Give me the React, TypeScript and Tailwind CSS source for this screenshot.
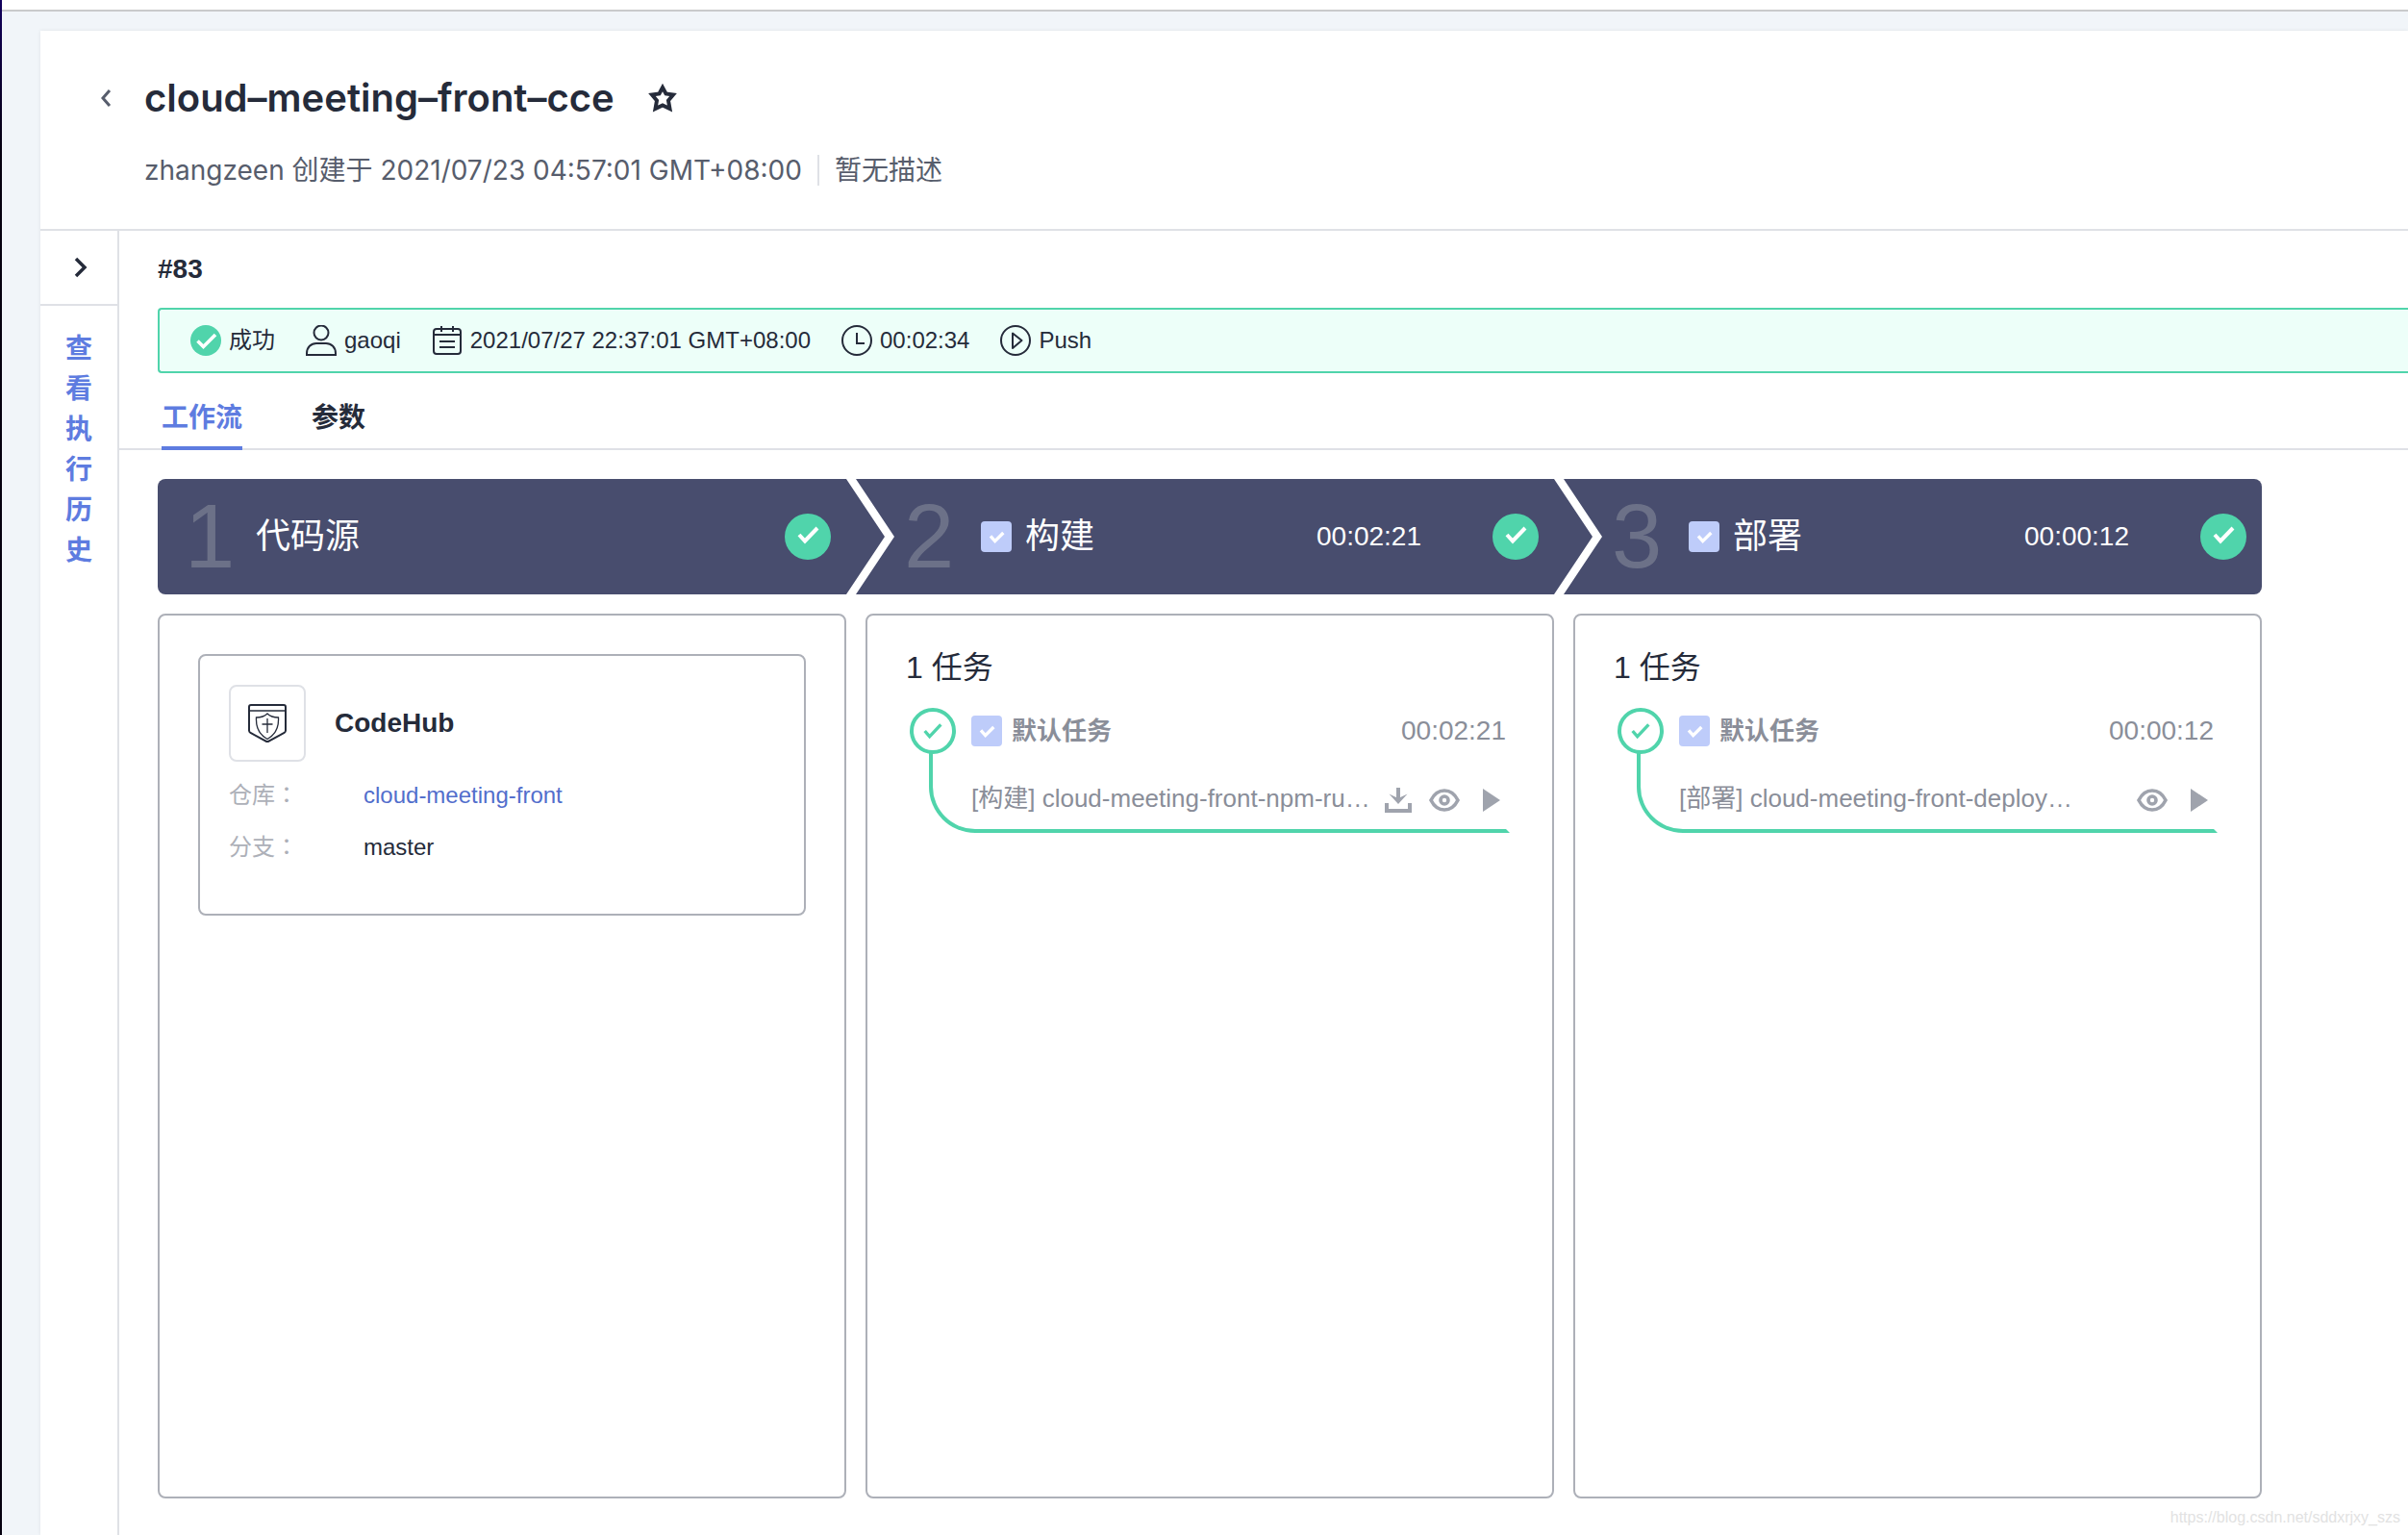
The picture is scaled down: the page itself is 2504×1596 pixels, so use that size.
import React from "react";

const HEAD_FONT = "font-[Inter,'Noto_Sans_CJK_SC',sans-serif]";

function Check({ className, points, width }: { className: string; points: string; width: number }) {
  return (
    <svg className={className} viewBox="0 0 48 48" fill="none" stroke="currentColor" strokeWidth={width} aria-hidden="true">
      <polyline points={points} />
    </svg>
  );
}

function CheckBox({ label }: { label: string }) {
  return (
    <span className="relative size-8 shrink-0">
      <input
        type="checkbox"
        aria-label={label}
        defaultChecked
        disabled
        className="block size-8 appearance-none rounded-sm bg-[#beccfa]"
      />
      <Check className="pointer-events-none absolute inset-0 size-8 text-white" points="15,23 22,31 35,18" width={5} />
    </span>
  );
}

function SuccessIcon() {
  return (
    <svg className="size-8" viewBox="0 0 32 32" fill="none" aria-hidden="true">
      <circle cx="16" cy="16" r="16" fill="#50d4ab" />
      <polyline points="7.5,16.5 13.5,22.5 26,10" stroke="#fff" strokeWidth="3.6" />
    </svg>
  );
}

function UserIcon() {
  return (
    <svg className="size-8" viewBox="0 0 32 32" fill="none" stroke="#252b3a" strokeWidth="2" aria-hidden="true">
      <circle cx="16" cy="8" r="7.5" />
      <path d="M1 31v-1.500c0-6.500 4.500-10.500 10-10.500h10c5.500 0 10 4 10 10.500v1.500z" />
    </svg>
  );
}

function CalendarIcon() {
  return (
    <svg className="size-8" viewBox="0 0 32 32" fill="none" stroke="#252b3a" strokeWidth="2" aria-hidden="true">
      <rect x="2" y="4" width="28" height="26" rx="3" />
      <path d="M2 10h28M10 1v6M22 1v6M8 17h16M8 23h16" />
    </svg>
  );
}

function ClockIcon() {
  return (
    <svg className="size-8" viewBox="0 0 32 32" fill="none" stroke="#252b3a" strokeWidth="2" aria-hidden="true">
      <circle cx="16" cy="16" r="15" />
      <path d="M16 8v11h8" />
    </svg>
  );
}

function TriggerIcon() {
  return (
    <svg className="size-8" viewBox="0 0 32 32" fill="none" stroke="#252b3a" strokeWidth="2" strokeLinejoin="round" aria-hidden="true">
      <circle cx="16" cy="16" r="15" />
      <path d="M13 8.500v15.500l9.500-8z" />
    </svg>
  );
}

function CodeHubIcon() {
  return (
    <svg className="size-10" viewBox="0 0 40 40" fill="none" stroke="#252b3a" aria-hidden="true">
      <path d="M1 3q0-2 2-2h34q2 0 2 2v24.500q0 1.500-1.500 2.500l-17.500 9.500l-17.500-9.500q-1.500-1-1.500-2.500z" strokeWidth="2" />
      <path d="M1 7h38" strokeWidth="1.500" />
      <path d="M20 10c3 3 7 4 11.500 4c.5 9-2.500 17.500-11.500 22.500c-9-5-12-13.500-11.500-22.500c4.500 0 8.500-1 11.500-4z" strokeWidth="1.300" />
      <path d="M20 15v15M14.500 21h11" strokeWidth="1.300" />
    </svg>
  );
}

function DownloadIcon() {
  return (
    <svg className="size-7" viewBox="0 0 28 28" fill="none" stroke="currentColor" strokeWidth="4" aria-hidden="true">
      <path d="M2 17v8h24v-8" />
      <path d="M14 1v13" />
      <path d="M4.500 7.500L14 18l9.500-10.500l-9.500 4.500z" fill="currentColor" stroke="none" />
    </svg>
  );
}

function EyeIcon() {
  return (
    <svg className="size-8" viewBox="0 0 32 32" fill="none" stroke="currentColor" aria-hidden="true">
      <path d="M2 16c3.500-7 8.500-10 14-10s10.500 3 14 10c-3.500 7-8.500 10-14 10s-10.500-3-14-10z" strokeWidth="3.600" />
      <circle cx="16" cy="16" r="4" strokeWidth="3.600" />
    </svg>
  );
}

function PlayIcon() {
  return (
    <svg className="h-6 w-[18px]" viewBox="0 0 18 24" fill="currentColor" aria-hidden="true">
      <path d="M0 0L18 12L0 24z" />
    </svg>
  );
}

type StageInfo = { no: number; name: string; time?: string };
const stages: StageInfo[] = [
  { no: 1, name: "代码源" },
  { no: 2, name: "构建", time: "00:02:21" },
  { no: 3, name: "部署", time: "00:00:12" },
];

function StageHeader({ stage, last }: { stage: StageInfo; last: boolean }) {
  return (
    <li className={`relative flex h-[120px] items-center pr-4 ${stage.time ? "pl-10" : "pl-7"}`}>
      <span className="w-[52px] text-[94px] leading-none text-[#6c7188]">{stage.no}</span>
      <div className={`flex flex-1 items-center gap-3.5 ${stage.time ? "pl-7" : "pl-[22px]"}`}>
        {stage.time && <CheckBox label={stage.name} />}
        <span className="text-[36px] text-white">{stage.name}</span>
      </div>
      {stage.time && <span className="mr-[74px] text-[28px] text-white">{stage.time}</span>}
      <span className="size-12 rounded-full bg-[#50d4ab] text-white">
        <Check className="size-12" points="15,22 21,28.500 34,15" width={4} />
      </span>
      {!last && (
        <svg className="absolute left-full top-0 z-10 h-[120px] w-[50px]" viewBox="0 0 50 120" aria-hidden="true">
          <path d="M0 0H10L50 60L10 120H0L40 60z" fill="#fff" />
        </svg>
      )}
    </li>
  );
}

function TaskCard({ time, name, download }: { time: string; name: string; download?: boolean }) {
  return (
    <section className="rounded-lg border-2 border-[#adb0b8] pl-10 pr-11 pt-[30px]">
      <h3 className="text-[32px] leading-[48px] text-[#252b3a]">1 任务</h3>
      <div className="ml-1 mt-[18px] flex h-12 items-center text-[#8a8e99]">
        <span className="size-12 rounded-full border-4 border-[#50d4ab] text-[#50d4ab]">
          <Check className="size-10" points="14,24 20,31 34,16" width={4} />
        </span>
        <div className="ml-4 flex flex-1 items-center gap-2.5">
          <CheckBox label="默认任务" />
          <span className="text-[26px] font-bold">默认任务</span>
        </div>
        <span className="mr-1 text-[28px]">{time}</span>
      </div>
      <div className="-mt-0.5 ml-6 flex h-[84px] items-center rounded-bl-[48px] border-4 border-t-0 border-[#50d4ab] border-r-transparent pl-10 pr-1.5 pt-4 text-[#8a8e99]">
        <span className="flex-1 truncate text-[26px]">{name}</span>
        <div className="flex items-center gap-[18px] pt-1 text-[#9fa3ad]">
          {download && (
            <button type="button" aria-label="下载">
              <DownloadIcon />
            </button>
          )}
          <button type="button" aria-label="查看">
            <EyeIcon />
          </button>
          <button type="button" aria-label="执行" className="pl-1.5">
            <PlayIcon />
          </button>
        </div>
      </div>
    </section>
  );
}

export default function App() {
  return (
    <div className="relative flex min-h-screen overflow-x-hidden bg-[#f1f5f9] font-['Liberation_Sans','Noto_Sans_CJK_SC',sans-serif] text-[#252b3a]">
      <div className="w-0.5 shrink-0 bg-linear-to-b from-[#12005e] via-[#05000f] to-[#05000f] via-10%" />
      <div className="flex min-w-0 flex-1 flex-col">
        <div className="h-3 border-b-2 border-[#c9cacb] bg-white" />
        <div className="ml-10 mt-5 flex flex-1 flex-col bg-white shadow-[0_0_4px_rgba(0,0,0,0.08)]">
          <header className={`flex h-52 border-b-2 border-[#dfe1e6] pl-[60px] pt-10 ${HEAD_FONT}`}>
            <button type="button" aria-label="返回" className="flex h-[60px] w-4 items-center justify-center text-[#575d6c]">
              <svg className="h-5 w-3" viewBox="0 0 12 20" fill="none" stroke="currentColor" strokeWidth="3" aria-hidden="true">
                <path d="M10 2L3 10L10 18" />
              </svg>
            </button>
            <div className="pl-8">
              <div className="flex h-[60px] items-center gap-[34px]">
                <h1 className="text-[40px] font-semibold">cloud–meeting–front–cce</h1>
                <button type="button" aria-label="收藏">
                  <svg className="size-8" viewBox="0 0 32 32" fill="none" stroke="#252b3a" strokeWidth="4" aria-hidden="true">
                    <path d="M16 5L19.500 11.500L27 12.500L22 18.500L23.500 27L16 23.500L8.500 27L10 18.500L5 12.500L12.500 11.500z" />
                  </svg>
                </button>
              </div>
              <div className="flex h-[90px] items-center text-[28px] text-[#575d6c]">
                <span>zhangzeen 创建于 2021/07/23 04:57:01 GMT+08:00</span>
                <span className="ml-4 border-l-2 border-[#dfe1e6] pl-4 leading-8">暂无描述</span>
              </div>
            </div>
          </header>

          <div className="flex flex-1">
            <aside className="flex w-[82px] shrink-0 flex-col items-center border-r-2 border-[#dfe1e6]">
              <button type="button" aria-label="展开" className="flex h-[78px] w-full items-center justify-center border-b-2 border-[#dfe1e6] pl-0.5">
                <svg className="size-6" viewBox="0 0 24 24" fill="none" stroke="#252b3a" strokeWidth="3.500" aria-hidden="true">
                  <path d="M8 3L17 12L8 21" />
                </svg>
              </button>
              <a href="#history" className="w-7 break-all pt-6 text-[28px] font-bold leading-[42px] text-[#5e7ce0]">
                查看执行历史
              </a>
            </aside>

            <main className="flex min-w-0 flex-1 flex-col">
              <h2 className="flex h-20 items-center pl-10 text-[28px] font-bold">#83</h2>
              <div className="ml-10 flex h-[68px] items-center gap-8 rounded-l-sm border-2 border-r-0 border-[#50d4ab] bg-[#edfff9] pl-8 text-2xl">
                <span className="flex items-center gap-2"><SuccessIcon />成功</span>
                <span className="flex items-center gap-2"><UserIcon />gaoqi</span>
                <span className="flex items-center gap-2"><CalendarIcon />2021/07/27 22:37:01 GMT+08:00</span>
                <span className="flex items-center gap-2"><ClockIcon />00:02:34</span>
                <span className="flex items-center gap-2"><TriggerIcon />Push</span>
              </div>

              <div role="tablist" className="flex h-20 gap-[72px] border-b-2 border-[#dfe1e6] pl-11 text-[28px] font-bold">
                <button type="button" role="tab" aria-selected="true" className="-mb-0.5 border-b-4 border-[#5e7ce0] pt-[18px] text-[#5e7ce0]">
                  工作流
                </button>
                <button type="button" role="tab" aria-selected="false" className="-mb-0.5 border-b-4 border-transparent pt-[18px]">
                  参数
                </button>
              </div>

              <div className="flex flex-1 flex-col gap-5 pb-[38px] pl-10 pr-[152px] pt-[30px]">
                <ol className="grid grid-cols-3 gap-5 rounded-lg bg-[#484d6e]">
                  {stages.map((s, i) => (
                    <StageHeader key={s.no} stage={s} last={i === stages.length - 1} />
                  ))}
                </ol>
                <div className="grid flex-1 grid-cols-3 gap-5">
                  <section className="rounded-lg border-2 border-[#adb0b8] p-10">
                    <div className="rounded-lg border-2 border-[#adb0b8] px-[30px] pb-[42px] pt-[30px]">
                      <div className="flex items-center gap-[30px]">
                        <span className="flex size-20 items-center justify-center rounded-lg border-2 border-[#dfe1e6]">
                          <CodeHubIcon />
                        </span>
                        <h3 className="text-[28px] font-bold">CodeHub</h3>
                      </div>
                      <dl className="grid grid-cols-[140px_1fr] pt-2 text-2xl leading-[54px]">
                        <dt className="text-[#adb0b8]">仓库<span className="font-['Noto_Sans_CJK_TC'] leading-none">：</span></dt>
                        <dd><a href="#repo" className="text-[#526ecc]">cloud-meeting-front</a></dd>
                        <dt className="text-[#adb0b8]">分支<span className="font-['Noto_Sans_CJK_TC'] leading-none">：</span></dt>
                        <dd>master</dd>
                      </dl>
                    </div>
                  </section>
                  <TaskCard time="00:02:21" name="[构建] cloud-meeting-front-npm-ru…" download />
                  <TaskCard time="00:00:12" name="[部署] cloud-meeting-front-deploy…" />
                </div>
              </div>
            </main>
          </div>
        </div>
      </div>
      <span className="absolute bottom-2 right-2 text-base leading-5 text-[#e2e2e2]">https://blog.csdn.net/sddxrjxy_szs</span>
    </div>
  );
}
